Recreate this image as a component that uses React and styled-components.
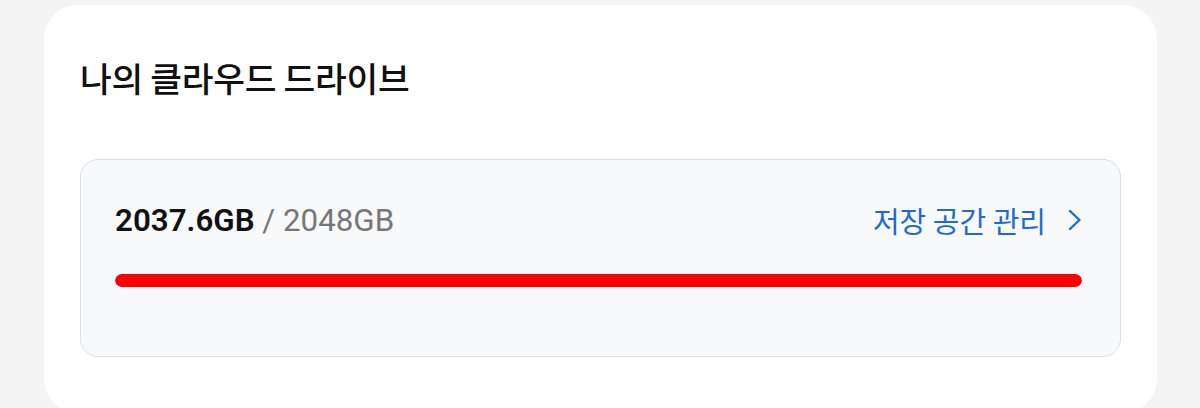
import styled, { createGlobalStyle } from 'styled-components';

const GlobalStyle = createGlobalStyle`
  html, body {
    margin: 0;
    padding: 0;
    background-color: #f4f4f4;
  }
  body {
    font-family: "Noto Sans CJK KR", "Noto Sans", sans-serif;
  }
`;

const Page = styled.div`
  display: flex;
  flex-direction: column;
  height: 408px;
  overflow: hidden;
  padding: 5px 43px 0 44px;
`;

const Card = styled.div`
  display: flex;
  flex-direction: column;
  background-color: #ffffff;
  border-radius: 34px;
  padding: 50px 36px 40px 36px;
  height: 500px;
`;

const Title = styled.h2`
  margin: 0;
  font-size: 34.5px;
  font-weight: 500;
  color: #111111;
  line-height: 44px;
  letter-spacing: -0.3px;
`;

const StorageBox = styled.div`
  display: flex;
  flex-direction: column;
  margin-top: 60px;
  height: 198px;
  box-sizing: border-box;
  padding: 40px 38px 0 34px;
  background-color: #f8f9fa;
  border: 1px solid #dedfe1;
  border-radius: 18px;
`;

const InfoRow = styled.div`
  display: flex;
  flex-direction: row;
  justify-content: space-between;
  align-items: center;
  height: 40px;
`;

const Usage = styled.div`
  font-family: Roboto, "Noto Sans", sans-serif;
  font-size: 31.3px;
  color: #777777;
`;

const Used = styled.span`
  font-weight: 600;
  color: #111111;
`;

const ManageLink = styled.a`
  display: flex;
  flex-direction: row;
  align-items: center;
  gap: 22px;
  font-size: 29px;
  color: #1f6bd0;
  text-decoration: none;
  cursor: pointer;
`;

const Bar = styled.div`
  margin-top: 34px;
  height: 13px;
  border-radius: 7px;
  background-color: #f1f2f3;
  overflow: hidden;
`;

const Fill = styled.div`
  height: 100%;
  border-radius: 7px;
  background-color: #ff0000;
`;

const Chevron = () => (
  <svg width="14" height="22" viewBox="0 0 14 22" fill="none">
    <path d="M2 2 L11.5 11 L2 20" stroke="#1f6bd0" strokeWidth="2.4" strokeLinecap="round" strokeLinejoin="round" />
  </svg>
);

const App = () => {
  const used = 2037.6;
  const total = 2048;
  const percent = Math.min(100, Math.ceil((used / total) * 100));

  return (
    <>
      <GlobalStyle />
      <Page>
        <Card>
          <Title>나의 클라우드 드라이브</Title>
          <StorageBox>
            <InfoRow>
              <Usage>
                <Used>{used}GB</Used> / {total}GB
              </Usage>
              <ManageLink>
                저장 공간 관리
                <Chevron />
              </ManageLink>
            </InfoRow>
            <Bar>
              <Fill style={{ width: `${percent}%` }} />
            </Bar>
          </StorageBox>
        </Card>
      </Page>
    </>
  );
};

export default App;
